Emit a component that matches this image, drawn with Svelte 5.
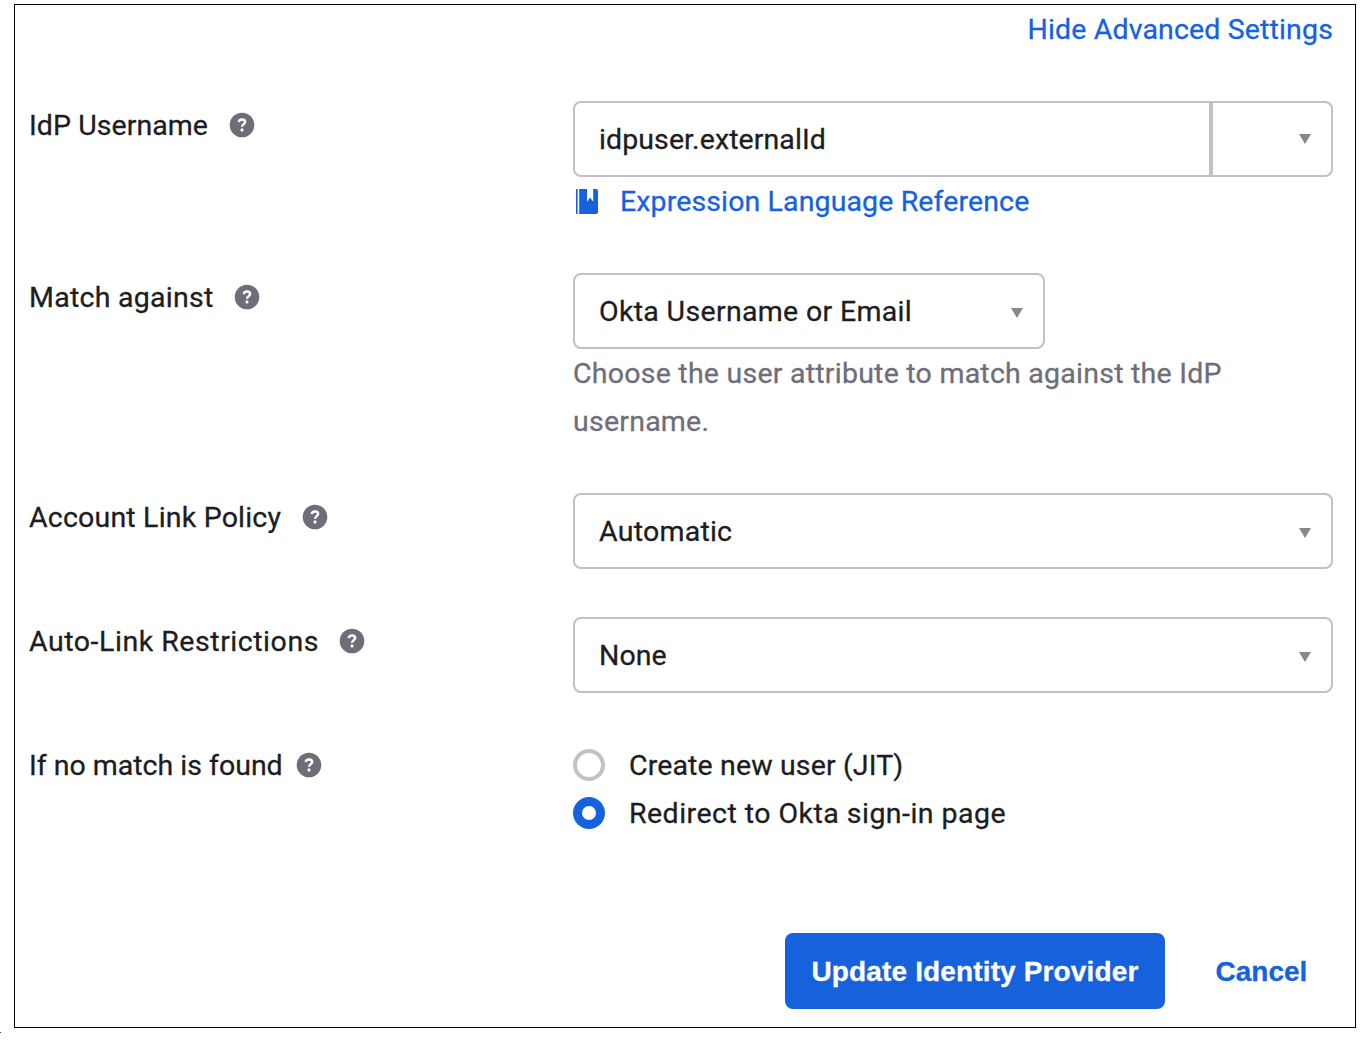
<script>
  let restriction = $state('None');
  let policy = $state('Automatic');
  let noMatch = $state('redirect');
</script>

{#snippet help()}
  <svg class="help" viewBox="0 0 26 26" aria-hidden="true">
    <circle cx="13" cy="13" r="12.3" fill="#6e6e78" />
    <path d="M9.8 10.1C10 8.4 11.2 7.5 13 7.5c1.9 0 3.1 1 3.1 2.5 0 2.1-3 2.2-3 4.7" fill="none" stroke="#fff" stroke-width="2.5" />
    <circle cx="13" cy="17.9" r="1.55" fill="#fff" />
  </svg>
{/snippet}

{#snippet arrow()}
  <svg class="arrow" viewBox="0 0 12 10" aria-hidden="true"><path d="M0 0h12L6 10z" fill="#888" /></svg>
{/snippet}

<main>
  <section class="panel">
    <div class="top"><a class="t-hide" href="#advanced">Hide Advanced Settings</a></div>

    <div class="row">
      <div class="label"><span class="t-idp">IdP Username</span>{@render help()}</div>
      <div class="field">
        <div class="group">
          <div class="box main-box"><span class="t-expr">idpuser.externalId</span></div>
          <div class="box side-box">{@render arrow()}</div>
        </div>
        <a class="reference" href="#reference">
          <svg class="book" viewBox="0 0 22 25" aria-hidden="true">
            <path d="M0 0h1.6v25H0zM3.2 0H11v12.8l3.1-4.2 3.1 4.2V0h2.8Q22 0 22 2v21q0 2-2 2H3.2z" fill="#1662dd" />
          </svg>
          <span class="t-ref">Expression Language Reference</span>
        </a>
      </div>
    </div>

    <div class="row">
      <div class="label"><span class="t-match">Match against</span>{@render help()}</div>
      <div class="field">
        <div class="box select short"><span class="t-okta">Okta Username or Email</span>{@render arrow()}</div>
        <p class="hint">Choose the user attribute to match against the IdP username.</p>
      </div>
    </div>

    <div class="row">
      <div class="label"><span class="t-policy">Account Link Policy</span>{@render help()}</div>
      <div class="field"><div class="box select"><span class="t-auto">{policy}</span>{@render arrow()}</div></div>
    </div>

    <div class="row">
      <div class="label"><span class="t-restrict">Auto-Link Restrictions</span>{@render help()}</div>
      <div class="field"><div class="box select"><span class="t-none">{restriction}</span>{@render arrow()}</div></div>
    </div>

    <div class="row">
      <div class="label tight"><span class="t-found">If no match is found</span>{@render help()}</div>
      <div class="field" role="radiogroup">
        <label class="option">
          <input type="radio" value="create" bind:group={noMatch} />
          <span class="t-create">Create new user (JIT)</span>
        </label>
        <label class="option">
          <input type="radio" value="redirect" bind:group={noMatch} />
          <span class="t-redirect">Redirect to Okta sign-in page</span>
        </label>
      </div>
    </div>

    <div class="actions">
      <button class="primary" type="button">Update Identity Provider</button>
      <button class="cancel" type="button">Cancel</button>
    </div>
  </section>
  <i class="speck"></i>
</main>

<style>
  :global(body) { background: #fff; }
  * { box-sizing: border-box; }
  main {
    position: relative;
    height: 1048px;
    padding: 4px 12px 0 14px;
    font: 28.5px/48px Roboto, "Liberation Sans", sans-serif;
    color: #1d1d21;
    -webkit-text-stroke: 0.3px currentColor;
    overflow: hidden;
  }
  .panel {
    height: 1024px;
    padding: 0 22px 0 14px;
    border: 1px solid #000;
    display: flex;
    flex-direction: column;
  }
  .top { display: flex; justify-content: flex-end; padding-top: 1px; margin-bottom: 47px; }
  a { color: #1662dd; text-decoration: none; }
  span, a { white-space: nowrap; }
  span { padding-top: 2px; }
  .row { display: grid; grid-template-columns: 544px 760px; margin-bottom: 48px; }
  .label { display: flex; align-items: center; height: 48px; gap: 20.5px; }
  .label.tight { gap: 13.5px; }
  .help { width: 26px; height: 26px; flex: none; }
  .group { display: flex; }
  .box {
    display: flex;
    align-items: center;
    justify-content: space-between;
    width: 760px;
    height: 76px;
    padding: 0 20px 0 24px;
    border: 2px solid #c1c1c8;
    border-radius: 8px;
  }
  .main-box { width: 638px; border-radius: 8px 0 0 8px; }
  .side-box { width: 122px; border-radius: 0 8px 8px 0; justify-content: flex-end; }
  .short { width: 472px; }
  .arrow { width: 12px; height: 10px; flex: none; }
  .select .arrow { margin-top: 3px; }
  .reference { display: flex; align-items: center; height: 48px; padding-left: 3px; }
  .book { width: 22px; height: 25px; margin-right: 22px; }
  .hint { margin: 0 0 -1px; padding-top: 1px; width: 680px; color: #6e6e78; letter-spacing: 0.24px; }
  .option { display: flex; align-items: center; height: 48px; }
  input {
    appearance: none;
    width: 32px;
    height: 32px;
    margin: 0 24px 0 0;
    border: 4px solid #c1c1c8;
    border-radius: 50%;
    background: #fff;
  }
  input:checked { border: 9px solid #1662dd; }
  .actions { display: flex; justify-content: flex-end; margin-top: 48px; }
  button {
    height: 76px;
    padding: 2px 0 0;
    border: 0;
    border-radius: 8px;
    font: 700 28px/48px "Liberation Sans", Arial, sans-serif;
  }
  .primary { width: 380px; background: #1662dd; color: #fff; letter-spacing: 0.14px; }
  .cancel { width: 142px; margin: 0 0 0 26px; padding-right: 1px; background: none; color: #1662dd; letter-spacing: 0; }
  .speck { position: absolute; left: 0; top: 1032px; width: 1px; height: 1px; background: #555; }

  .t-hide { letter-spacing: 0.15px; }
  .t-idp { letter-spacing: 0.07px; }
  .t-match { letter-spacing: 0.26px; }
  .t-policy { letter-spacing: 0.2px; }
  .t-restrict { letter-spacing: 0.54px; }
  .t-found { letter-spacing: 0; }
  .t-expr { letter-spacing: 0.09px; }
  .t-ref { letter-spacing: 0.12px; }
  .t-okta { letter-spacing: 0.33px; }
  .t-auto { letter-spacing: 0.24px; }
  .t-none { letter-spacing: 0.1px; }
  .t-create { letter-spacing: 0.14px; }
  .t-redirect { letter-spacing: 0.47px; }
</style>
